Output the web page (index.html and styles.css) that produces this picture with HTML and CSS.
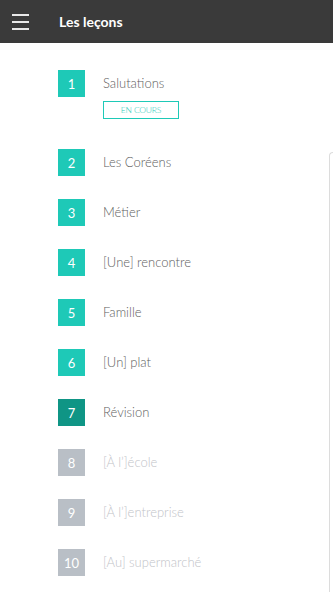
FILE: index.html
```html
<!DOCTYPE html>
<html lang="fr">
<head>
    <meta charset="UTF-8">
    <title>Les leçons</title>
    <link rel="stylesheet" href="styles.css">
</head>
<body>
    <header class="bar">
        <div class="burger"><span></span><span></span><span></span></div>
        <h1>Les leçons</h1>
    </header>

    <div class="edge"></div>

    <ul class="lessons">
        <li class="lesson">
            <span class="num">1</span>
            <div class="info">
                <span class="name">Salutations</span>
                <span class="tag">EN COURS</span>
            </div>
        </li>
        <li class="lesson"><span class="num">2</span><div class="info"><span class="name">Les Coréens</span></div></li>
        <li class="lesson"><span class="num">3</span><div class="info"><span class="name">Métier</span></div></li>
        <li class="lesson"><span class="num">4</span><div class="info"><span class="name">[Une] rencontre</span></div></li>
        <li class="lesson"><span class="num">5</span><div class="info"><span class="name">Famille</span></div></li>
        <li class="lesson"><span class="num">6</span><div class="info"><span class="name">[Un] plat</span></div></li>
        <li class="lesson review"><span class="num">7</span><div class="info"><span class="name">Révision</span></div></li>
        <li class="lesson locked"><span class="num">8</span><div class="info"><span class="name">[À l’]école</span></div></li>
        <li class="lesson locked"><span class="num">9</span><div class="info"><span class="name">[À l’]entreprise</span></div></li>
        <li class="lesson locked"><span class="num">10</span><div class="info"><span class="name">[Au] supermarché</span></div></li>
    </ul>
</body>
</html>
```

FILE: styles.css
```css
body {
    margin: 0;
    font-family: Lato, "Open Sans", sans-serif;
    background: #fff;
}

.bar {
    height: 43px;
    background: #3a3a3a;
    display: flex;
    align-items: center;
}

.burger {
    width: 17px;
    margin-left: 12px;
    display: flex;
    flex-direction: column;
    gap: 5px;
}

.burger span {
    display: block;
    height: 2px;
    background: #e8e8e8;
}

.bar h1 {
    margin: 0 0 0 30px;
    font-size: 14px;
    font-weight: 700;
    color: #fff;
}

.edge {
    position: absolute;
    top: 152px;
    right: 0;
    width: 3px;
    height: 440px;
    border-left: 1px solid #dcdcdc;
    border-top: 1px solid #dcdcdc;
    border-top-left-radius: 4px;
}

.lessons {
    list-style: none;
    margin: 0;
    padding: 27px 0 0 58px;
    display: flex;
    flex-direction: column;
    gap: 23px;
}

.lesson {
    display: flex;
    align-items: flex-start;
    gap: 18px;
}

.num {
    width: 27px;
    height: 27px;
    flex: none;
    background: #1ec9b7;
    color: #fff;
    font-size: 13px;
    display: flex;
    align-items: center;
    justify-content: center;
}

.info {
    display: flex;
    flex-direction: column;
    gap: 4px;
}

.name {
    font-size: 13px;
    font-weight: 300;
    line-height: 27px;
    color: #5e5e5e;
}

.tag {
    width: 74px;
    height: 16px;
    border: 1px solid #1ec9b7;
    color: #1ec9b7;
    font-size: 8.5px;
    font-weight: 300;
    letter-spacing: -0.2px;
    display: flex;
    align-items: center;
    justify-content: center;
    margin-bottom: 7px;
}

.review .num {
    background: #0f9585;
}

.locked .num {
    background: #b9bfc6;
}

.locked .name {
    color: #bfc3c8;
}
```
